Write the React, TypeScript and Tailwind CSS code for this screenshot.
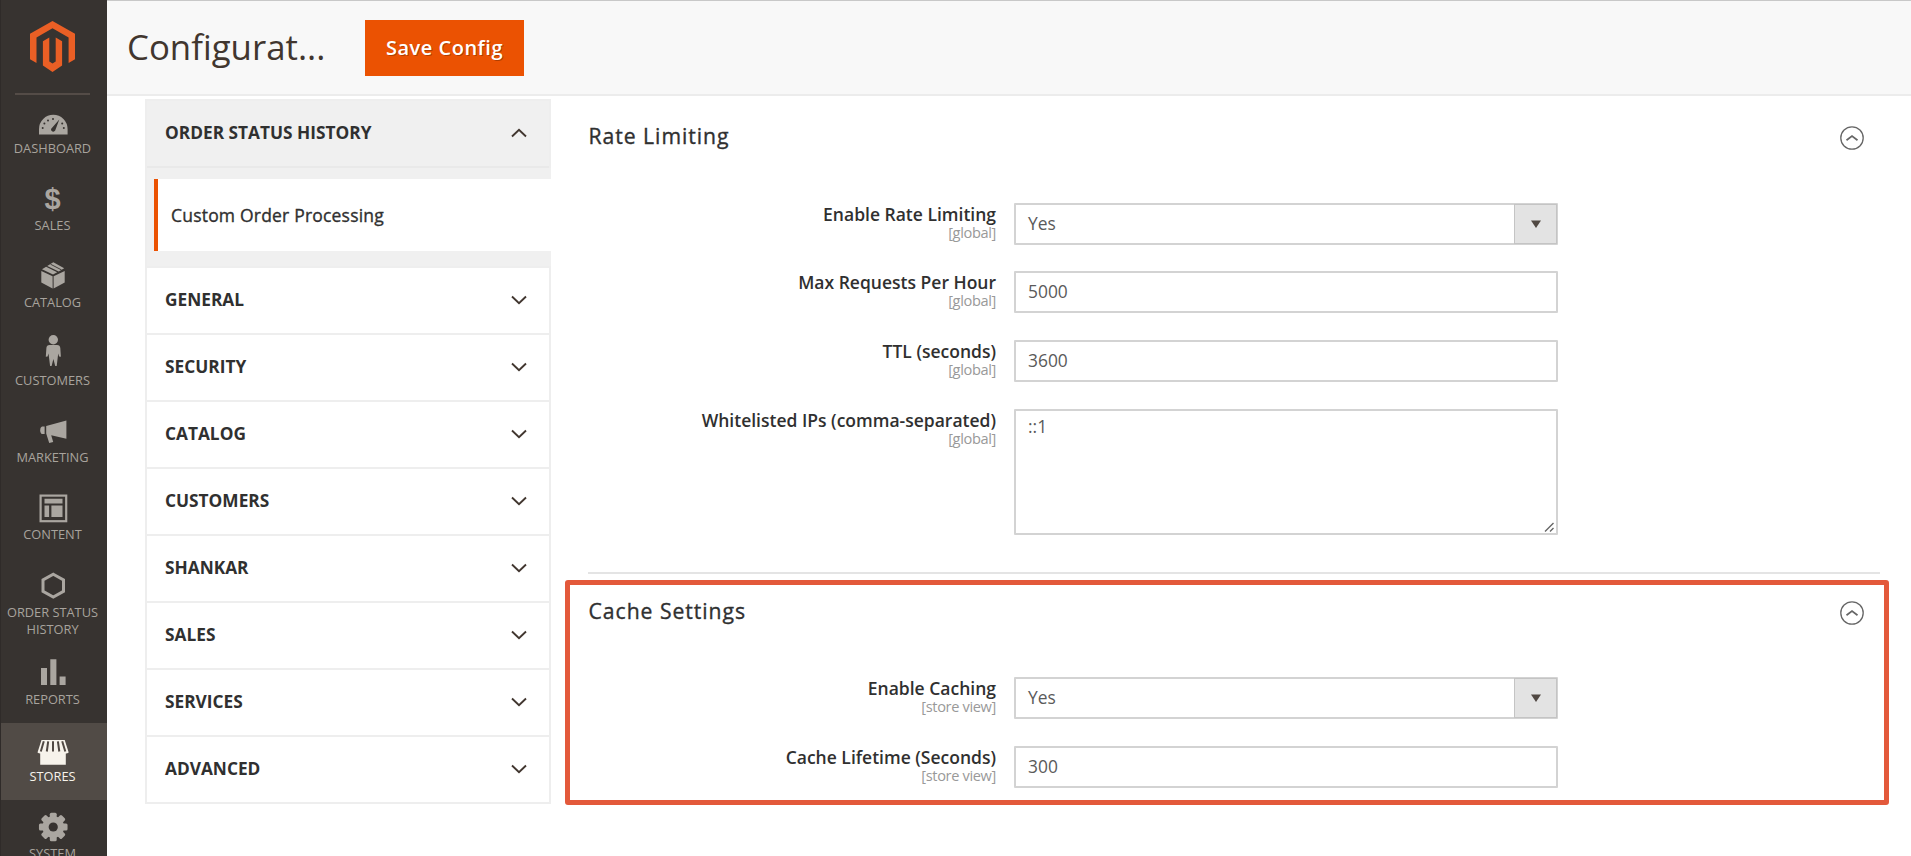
import type { ReactNode } from "react";

const ICONS: Record<string, ReactNode> = {
  dashboard: (
    <>
      <path d="M8 35.5V30a14.3 14.3 0 0 1 28.6 0v5.500z" fill="#aaa6a0" />
      <path d="M28.300 20.500L24.200 31.600a2.300 2.300 0 0 1-4.200-1.600z" fill="#373330" />
      <g fill="#373330">
        <circle cx="11.700" cy="29" r="1" />
        <circle cx="13.400" cy="24.600" r="1" />
        <circle cx="17" cy="21.400" r="1" />
        <circle cx="22" cy="19.900" r="1" />
        <circle cx="31.200" cy="24.600" r="1" />
        <circle cx="32.800" cy="29" r="1" />
      </g>
    </>
  ),
  sales: null,
  catalog: (
    <g fill="#aaa6a0">
      <path d="M10.300 18L21.600 23.200V35.400L10.300 29.600z" />
      <path d="M33.700 18L22.600 23.200V35.400L33.700 29.600z" />
      <path d="M11 16.200L15.100 13.700 26.200 19.300 22 21.600z" />
      <path d="M16.200 12.900L22.300 9.200 33.200 15.200 27.700 18.500z" />
      <path d="M19.500 11.200L30.500 16.900" stroke="#373330" strokeWidth="0.900" />
    </g>
  ),
  customers: (
    <g fill="#aaa6a0">
      <circle cx="22.300" cy="8.700" r="4.700" />
      <path d="M18.500 14h7.600c2 0 3 1 3.200 3l.6 8.800-1.800-.2-.9-3-1.500 12.500h-1.500l-1.800-7-1.800 7h-1.500L17.500 22.600l-.9 3-1.800.2.600-8.800c.2-2 1.200-3 3.100-3z" />
    </g>
  ),
  marketing: (
    <g fill="#aaa6a0">
      <path d="M35.400 12.500V30.800L20.200 27.200l2 6.700-4 1.200-3-9.500V18z" />
      <path d="M13.600 18.500v7.600H11.200q-2-.5-2-3.800t2-3.800z" />
    </g>
  ),
  content: (
    <g fill="none" stroke="#aaa6a0" strokeWidth="2.200">
      <rect x="9.600" y="10.600" width="25.600" height="25.600" />
      <path d="M13.500 13.700h18v4.800h-18zM13.500 20.500h4.600v11.500h-4.600zM20.400 20.500h11.100v11.500H20.400z" fill="#aaa6a0" stroke="none" />
    </g>
  ),
  hexagon: <path d="M22.300 11.300L32.500 16.900V28.300L22.300 34 12 28.300V16.900z" fill="none" stroke="#aaa6a0" strokeWidth="3" />,
  reports: <path d="M10 18h6v17h-6zM19.300 9.300h6.100V35h-6.100zM28.600 26.600h6V35h-6z" fill="#aaa6a0" />,
  stores: (
    <>
      <path d="M9.200 25.500h25.600V37.700H9.200zM10.500 13h23.200l4 12.500q-2.500 2-5.500 0-2.500 2-5.100 0-2.500 2-5.100 0-2.500 2-5.100 0-2.500 2-5.100 0-2.500 2-5.300 0z" fill="#f7f3eb" />
      <path d="M12.800 14.300L9.800 24.500M17.200 14.300L15.800 24.500M22 14.300V24.500M26.900 14.300L28.300 24.500M31.200 14.300L34.300 24.500" stroke="#514943" strokeWidth="2" />
    </>
  ),
  system: (
    <g fill="#aaa6a0">
      <g>
        {[0, 45, 90, 135].map((a) => (
          <rect key={a} x="18.800" y="8.700" width="6.900" height="28.600" rx="1.500" transform={`rotate(${a} 22.250 23)`} />
        ))}
      </g>
      <circle cx="22.250" cy="23" r="10.800" />
      <circle cx="22.250" cy="23" r="4.600" fill="#373330" />
    </g>
  ),
};

const MENU = [
  { icon: "dashboard", label: "DASHBOARD", box: "h-[77.400px]" },
  { icon: "sales", label: "SALES", box: "h-[77.400px]" },
  { icon: "catalog", label: "CATALOG", box: "h-[77.400px]" },
  { icon: "customers", label: "CUSTOMERS", box: "h-[77.400px]" },
  { icon: "marketing", label: "MARKETING", box: "h-[77.400px]" },
  { icon: "content", label: "CONTENT", box: "h-[77.400px]" },
  { icon: "hexagon", label: "ORDER STATUS HISTORY", box: "h-[87px]" },
  { icon: "reports", label: "REPORTS", box: "h-[77px]" },
  { icon: "stores", label: "STORES", box: "h-[77px] bg-[#514b46] text-[#f7f3eb]" },
  { icon: "system", label: "SYSTEM", box: "h-[77px]" },
];

const SECTIONS = ["GENERAL", "SECURITY", "CATALOG", "CUSTOMERS", "SHANKAR", "SALES", "SERVICES", "ADVANCED"];

function Chevron({ up = false }: { up?: boolean }) {
  return (
    <svg width="16" height="10" viewBox="0 0 16 10" fill="none" stroke="#41362f" strokeWidth="1.900">
      <path d={up ? "M1 8.500L8 1.800 15 8.500" : "M1 1.500L8 8.200 15 1.500"} />
    </svg>
  );
}

function Sidebar() {
  return (
    <aside className="flex w-[107px] shrink-0 flex-col items-center border-l border-[#2f2b29] bg-[#373330] text-[#a8a39d]">
      <svg className="mt-[21px] mr-[3px] shrink-0" width="45" height="51" viewBox="0 0 45 51" fill="#ea5f25">
        <path d="M22.500 0L45 12.800V38.300L38.600 42V16.500L22.500 7.300 6.500 16.500V42L0 38.300V12.800z" />
        <path d="M19.300 16.600V40.600L22.500 42.500 25.700 40.600V16.600L32.100 20.300V44.500L22.500 51 12.900 44.500V20.300z" />
      </svg>
      <div className="mt-[21px] mr-[3px] h-[2px] w-[75px] shrink-0 bg-[#544c47]" />
      <div className="-mt-[0.500px] flex w-full flex-col">
        {MENU.map((m) => (
          <a key={m.label} className={`flex w-full shrink-0 flex-col items-center pt-[4px] pr-[3px] ${m.box}`}>
            {m.icon === "sales" ? (
              <span className="h-[41px] shrink-0 pt-[8px] font-['Liberation_Sans'] text-[29px] leading-[30px] font-bold text-[#aaa6a0]">$</span>
            ) : (
              <svg className="shrink-0" width="44" height="41" viewBox="0 0 44 41">
                {ICONS[m.icon]}
              </svg>
            )}
            <span className="text-center text-[12.800px] leading-[17px]">{m.label}</span>
          </a>
        ))}
      </div>
    </aside>
  );
}

function ConfigNav() {
  return (
    <nav className="mt-[3px] ml-[38px] w-[406px] shrink-0 self-start border-2 border-[#eeeeee] text-[17.300px] text-[#303030]">
      <div className="flex h-[67px] items-center justify-between border-b-2 border-[#e9e9e9] bg-[#f0f0f0] pr-[22px] pb-[1px] pl-[18px] font-bold">
        ORDER STATUS HISTORY
        <Chevron up />
      </div>
      <div className="-mr-[2px] bg-[#f0f0f0] pt-[11px] pb-[15px] pl-[7px]">
        <div className="flex h-[72px] items-center border-l-[4px] border-[#eb5202] bg-white pl-[13px] text-[17.500px] tracking-[0.2px] [-webkit-text-stroke:0.35px_#303030]">
          Custom Order Processing
        </div>
      </div>
      {SECTIONS.map((s) => (
        <div key={s} className="flex h-[67px] items-center justify-between border-t-2 border-[#eeeeee] pr-[22px] pb-[1px] pl-[18px] font-bold">
          {s}
          <Chevron />
        </div>
      ))}
    </nav>
  );
}

function Field({ label, scope, className, children }: { label: string; scope: string; className: string; children: ReactNode }) {
  return (
    <div className={`flex ${className}`}>
      <div className="w-[408px] shrink-0 text-right">
        <div className="text-[17.500px] leading-[22px] font-semibold text-[#303030]">{label}</div>
        <div className="-mt-[2px] text-[14.600px] leading-[18px] tracking-[-0.350px] text-[#999999]">{scope}</div>
      </div>
      <div className="ml-[18px] w-[544px]">{children}</div>
    </div>
  );
}

function TextInput({ value }: { value: string }) {
  return <div className="flex h-[42px] items-center rounded-[1px] border-2 border-[#d3d3d3] pb-[1px] pl-[12px] text-[17.400px] text-[#5a5a5a]">{value}</div>;
}

function Select() {
  return (
    <div className="flex h-[42px] rounded-[1px] border-2 border-[#d3d3d3] text-[17.400px] text-[#5a5a5a]">
      <div className="flex flex-1 items-center pb-[1px] pl-[12px]">Yes</div>
      <div className="-m-px flex w-[43px] items-center justify-center border border-[#c4c4c4] bg-[#e3e3e3]">
        <svg width="10" height="8" viewBox="0 0 10 8" fill="#514943">
          <path d="M0 .5h10L5 8z" />
        </svg>
      </div>
    </div>
  );
}

function SectionHead({ title }: { title: string }) {
  return (
    <div className="flex h-[32px] items-center justify-between">
      <h2 className="self-start pl-[0.500px] text-[21.200px] leading-[31px] tracking-[0.045em] text-[#303030] [-webkit-text-stroke:0.35px_#303030]">{title}</h2>
      <svg className="mt-[4px] mr-[15px]" width="26" height="26" viewBox="0 0 26 26" fill="none" stroke="#666">
        <circle cx="13" cy="13" r="11.200" strokeWidth="1.300" />
        <path d="M7.500 15.200L13 11 18.500 15.200" strokeWidth="1.700" />
      </svg>
    </div>
  );
}

export default function App() {
  return (
    <div className="flex h-[856px] w-[1911px] overflow-hidden bg-white font-['Open_Sans',sans-serif]">
      <Sidebar />
      <div className="flex flex-1 flex-col">
        <header className="flex h-[96px] shrink-0 items-center border-t border-b-2 border-t-[#c8c8c8] border-b-[#ececec] bg-[#f8f8f8]">
          <h1 className="-mt-[1px] ml-[20px] w-[238px] text-[34.800px] leading-[46px] text-[#41362f]">Configurat...</h1>
          <button className="h-[56px] w-[159px] bg-[#eb5202] text-[20px] font-semibold tracking-[0.025em] text-white [text-shadow:1px_1px_0_rgba(0,0,0,0.25)]">
            Save Config
          </button>
        </header>
        <div className="flex">
          <ConfigNav />
          <main className="ml-[14px] w-[1324px]">
            <section className="mr-[9px] ml-[23px] h-[478px] border-b-2 border-[#e4e4e4] pt-[24px]">
              <SectionHead title="Rate Limiting" />
              <Field label="Enable Rate Limiting" scope="[global]" className="mt-[51px] h-[68px]">
                <Select />
              </Field>
              <Field label="Max Requests Per Hour" scope="[global]" className="h-[69px]">
                <TextInput value="5000" />
              </Field>
              <Field label="TTL (seconds)" scope="[global]" className="h-[69px]">
                <TextInput value="3600" />
              </Field>
              <Field label="Whitelisted IPs (comma-separated)" scope="[global]" className="">
                <div className="flex h-[126px] items-end justify-between rounded-[1px] border-2 border-[#d3d3d3] pl-[12px] text-[17.400px] leading-[24px] text-[#5a5a5a]">
                  <span className="self-start pt-[3px]">::1</span>
                  <svg width="12" height="11" viewBox="0 0 12 11" stroke="#666" strokeWidth="1.400">
                    <path d="M1 9.500L9.500 1M6 9.500L9.500 6" />
                  </svg>
                </div>
              </Field>
            </section>
            <section className="mt-[6px] h-[225px] rounded-[3px] border-[5px] border-[#e3593b] pr-[4px] pl-[18px]">
              <div className="pt-[10px]">
                <SectionHead title="Cache Settings" />
              </div>
              <Field label="Enable Caching" scope="[store view]" className="mt-[50px] h-[69px]">
                <Select />
              </Field>
              <Field label="Cache Lifetime (Seconds)" scope="[store view]" className="">
                <TextInput value="300" />
              </Field>
            </section>
          </main>
        </div>
      </div>
    </div>
  );
}
